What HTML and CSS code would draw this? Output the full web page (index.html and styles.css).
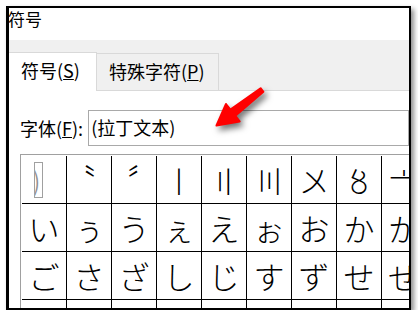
FILE: index.html
```html
<!DOCTYPE html>
<html lang="zh-CN">
<head>
    <meta charset="UTF-8">
    <title>符号</title>
    <link rel="stylesheet" href="styles.css">
</head>
<body>
    <div class="frame">
        <div class="title">符号</div>

        <!-- Tabs -->
        <div class="tabs">
            <div class="tab active">符号(<u>S</u>)</div>
            <div class="tab">特殊字符(<u>P</u>)</div>
        </div>

        <div class="panel">
            <div class="font-row">
                <span class="font-label">字体(<u>F</u>):</span>
                <div class="font-box">(拉丁文本)</div>
            </div>

            <div class="grid">
                <div class="cell"><span class="missing">)</span></div>
                <div class="cell"><span class="nudge-left">〝</span></div>
                <div class="cell"><span class="nudge-right">〞</span></div>
                <div class="cell">〡</div>
                <div class="cell">〢</div>
                <div class="cell">〣</div>
                <div class="cell">〤</div>
                <div class="cell">〥</div>
                <div class="cell">〦</div>
                <div class="cell">〧</div>
                <div class="cell">〨</div>
                <div class="cell">〩</div>
                <div class="cell">〸</div>
                <div class="cell">ぁ</div>
                <div class="cell">あ</div>
                <div class="cell">ぃ</div>

                <div class="cell">い</div>
                <div class="cell">ぅ</div>
                <div class="cell">う</div>
                <div class="cell">ぇ</div>
                <div class="cell">え</div>
                <div class="cell">ぉ</div>
                <div class="cell">お</div>
                <div class="cell">か</div>
                <div class="cell">が</div>
                <div class="cell">き</div>
                <div class="cell">ぎ</div>
                <div class="cell">く</div>
                <div class="cell">ぐ</div>
                <div class="cell">け</div>
                <div class="cell">げ</div>
                <div class="cell">こ</div>

                <div class="cell">ご</div>
                <div class="cell">さ</div>
                <div class="cell">ざ</div>
                <div class="cell">し</div>
                <div class="cell">じ</div>
                <div class="cell">す</div>
                <div class="cell">ず</div>
                <div class="cell">せ</div>
                <div class="cell">ぜ</div>
                <div class="cell">そ</div>
                <div class="cell">ぞ</div>
                <div class="cell">た</div>
                <div class="cell">だ</div>
                <div class="cell">ち</div>
                <div class="cell">ぢ</div>
                <div class="cell">っ</div>

                <div class="cell">つ</div>
                <div class="cell">づ</div>
                <div class="cell">て</div>
                <div class="cell">で</div>
                <div class="cell">と</div>
                <div class="cell">ど</div>
                <div class="cell">な</div>
                <div class="cell">に</div>
                <div class="cell">ぬ</div>
                <div class="cell">ね</div>
                <div class="cell">の</div>
                <div class="cell">は</div>
                <div class="cell">ば</div>
                <div class="cell">ぱ</div>
                <div class="cell">ひ</div>
                <div class="cell">び</div>
            </div>
        </div>

        <!-- Red pointer arrow -->
        <svg class="arrow" width="80" height="60" viewBox="0 0 80 60">
            <polygon points="56.6,5.2 59.4,8.8 31.4,32.8 35.6,38.4 12.5,42.5 22,21 26.4,26.6" fill="#f00" stroke="#f00" stroke-width="2" stroke-linejoin="round"/>
        </svg>
    </div>
</body>
</html>
```

FILE: styles.css
```css
body {
    margin: 0;
    padding: 6px 0 0 6px;
    background: #fff;
    font-family: "Noto Sans CJK SC", "Noto Sans", sans-serif;
    color: #000;
}

.frame {
    position: relative;
    width: 400px;
    height: 300px;
    border: 2px solid #000;
    border-left-width: 3px;
    background: #fff;
    overflow: hidden;
    box-shadow: 3px 3px 5px rgba(0, 0, 0, 0.45);
}

.title {
    height: 32px;
    margin-left: -1px;
    font-size: 17px;
    line-height: 21px;
}

.tabs {
    display: flex;
    align-items: flex-end;
    height: 50px;
    background: #f0f0f0;
    border-bottom: 1px solid #d9d9d9;
}

.tab {
    height: 34px;
    padding: 2px 13px 0 12px;
    border-top: 1px solid #d9d9d9;
    border-right: 1px solid #d9d9d9;
    font-size: 18px;
    line-height: 30px;
}

.tab.active {
    width: 63px;
    height: 36px;
    margin-bottom: -1px;
    padding: 2px 12px 0 12px;
    background: #fff;
}

.panel {
    padding: 19px 0 0 11px;
}

.font-row {
    display: flex;
    align-items: center;
    gap: 5px;
}

.font-label {
    font-size: 18px;
}

.font-box {
    flex: 1;
    height: 34px;
    padding-left: 2px;
    border: 1px solid #a9a9a9;
    font-size: 18px;
    line-height: 32px;
}

.grid {
    display: grid;
    grid-template-columns: repeat(16, 45px);
    grid-auto-rows: 48px;
    width: max-content;
    margin-top: 8px;
    padding: 1px 0 0 1px;
    border-top: 1px solid #a0a0a0;
    border-left: 1px solid #a0a0a0;
    font-family: "Noto Sans CJK JP", sans-serif;
    font-weight: 300;
    font-size: 31px;
}

.cell {
    display: flex;
    align-items: center;
    justify-content: center;
    box-sizing: border-box;
    border-right: 1px solid #000;
    border-bottom: 1px solid #000;
}

.nudge-left {
    transform: translate(-9px, -2px);
}

.nudge-right {
    transform: translate(9px, -2px);
}

.missing {
    display: block;
    width: 7px;
    height: 34px;
    border: 1px solid #a0a0a0;
    color: #909090;
    font-size: 30px;
    line-height: 32px;
    text-indent: -3px;
    overflow: hidden;
    margin-right: 12px;
}

.arrow {
    position: absolute;
    left: 195px;
    top: 75px;
    filter: drop-shadow(3px 4px 3px rgba(0, 0, 0, 0.55));
}
```
